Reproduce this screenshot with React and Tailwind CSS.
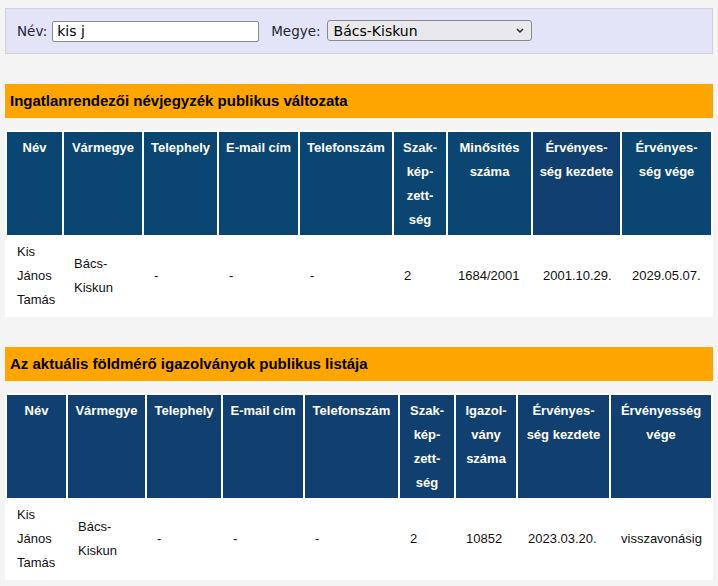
import { useState } from "react";

const headA = [
  ["Név"],
  ["Vármegye"],
  ["Telephely"],
  ["E-mail cím"],
  ["Telefonszám"],
  ["Szak-", "kép-", "zett-", "ség"],
  ["Minősítés", "száma"],
  ["Érvényes-", "ség kezdete"],
  ["Érvényes-", "ség vége"],
];
const colsA = [57, 80, 75, 81, 94, 54, 85, 89, 91];
const rowA = ["-", "-", "-", "2", "1684/2001", "2001.10.29.", "2029.05.07."];

const headB = [
  ["Név"],
  ["Vármegye"],
  ["Telephely"],
  ["E-mail cím"],
  ["Telefonszám"],
  ["Szak-", "kép-", "zett-", "ség"],
  ["Igazol-", "vány", "száma"],
  ["Érvényes-", "ség kezdete"],
  ["Érvényesség", "vége"],
];
const colsB = [61, 79, 76, 82, 95, 56, 62, 93, 102];
const rowB = ["-", "-", "-", "2", "10852", "2023.03.20.", "visszavonásig"];

function Section({ title, head, cols, row, headBg, hiCol }) {
  return (
    <div>
      <div className="h-[34px] bg-[#ffa500] flex items-center pl-[5px] text-[15px] font-bold text-black">
        {title}
      </div>
      <table className="mt-[12px] w-full table-fixed border-collapse font-['Liberation_Sans',Arial,sans-serif]">
        <colgroup>
          {cols.map((w, i) => (
            <col key={i} style={{ width: w }} />
          ))}
        </colgroup>
        <thead>
          <tr>
            {head.map((lines, i) => (
              <th
                key={i}
                className={`border-2 border-white align-top pt-[4px] pb-[3px] px-1 text-center text-[13px] font-bold leading-[24px] text-white ${
                  i === hiCol ? "bg-[#113f70]" : headBg
                }`}
              >
                {lines.map((l, j) => (
                  <div key={j}>{l}</div>
                ))}
              </th>
            ))}
          </tr>
        </thead>
        <tbody>
          <tr className="bg-white text-[13px] leading-[24px] text-[#111]">
            <td className="border-2 border-white py-[3px] pl-[10px] align-middle">
              Kis
              <br />
              János
              <br />
              Tamás
            </td>
            <td className="border-2 border-white pl-[10px] align-middle">
              Bács-
              <br />
              Kiskun
            </td>
            {row.map((c, i) => (
              <td key={i} className="border-2 border-white pl-[10px] align-middle whitespace-nowrap">
                {c}
              </td>
            ))}
          </tr>
        </tbody>
      </table>
    </div>
  );
}

export default function App() {
  const [name, setName] = useState("kis j");
  const [county, setCounty] = useState("Bács-Kiskun");

  return (
    <div className="min-h-screen bg-[#f4f4f4] px-[5px] pt-[8px] font-['Liberation_Sans',Arial,sans-serif]">
      {/* FILTER */}
      <div className="h-[46px] border border-[#d2d2d6] bg-[#e4e4f8] flex items-center pl-[11px] text-[13.5px] text-[#1d2535] font-['DejaVu_Sans',sans-serif]">
        <span>Név:</span>
        <input
          className="ml-[5px] w-[207px] h-[21px] bg-white border border-[#8a8a8a] rounded-[2px] px-[4px] text-[14px] text-black outline-none"
          value={name}
          onChange={(e) => setName(e.target.value)}
        />
        <span className="ml-[12px]">Megye:</span>
        <div className="relative ml-[6px]">
          <select
            className="appearance-none w-[205px] h-[21px] bg-[#e9e9ed] border border-[#8a8a8a] rounded-[3px] pl-[6px] text-[14px] text-black outline-none"
            value={county}
            onChange={(e) => setCounty(e.target.value)}
          >
            <option>Bács-Kiskun</option>
            <option>Baranya</option>
            <option>Békés</option>
          </select>
          <svg
            className="absolute right-[8px] top-[8px] pointer-events-none"
            width="8"
            height="5"
            viewBox="0 0 8 5"
          >
            <path d="M1 1l3 3 3-3" fill="none" stroke="#222" strokeWidth="1.4" />
          </svg>
        </div>
      </div>

      <div className="mt-[30px]">
        <Section
          title="Ingatlanrendezői névjegyzék publikus változata"
          head={headA}
          cols={colsA}
          row={rowA}
          headBg="bg-[#0b4572]"
          hiCol={7}
        />
      </div>

      <div className="mt-[30px] pb-[6px]">
        <Section
          title="Az aktuális földmérő igazolványok publikus listája"
          head={headB}
          cols={colsB}
          row={rowB}
          headBg="bg-[#113f70]"
          hiCol={-1}
        />
      </div>
    </div>
  );
}
